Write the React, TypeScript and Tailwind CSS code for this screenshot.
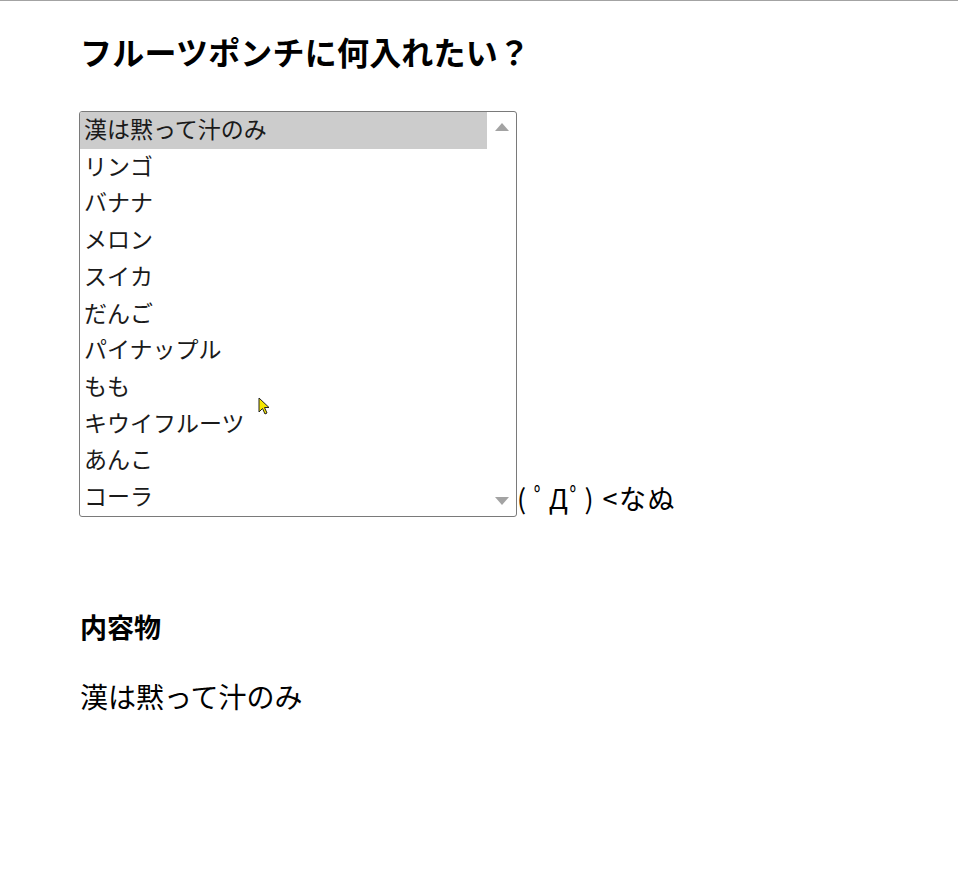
import React from 'react';

const fruits = [
  '漢は黙って汁のみ',
  'リンゴ',
  'バナナ',
  'メロン',
  'スイカ',
  'だんご',
  'パイナップル',
  'もも',
  'キウイフルーツ',
  'あんこ',
  'コーラ',
];

const font = { fontFamily: '"Noto Sans CJK JP", "Noto Sans", sans-serif' };

const Cursor: React.FC = () => (
  <svg
    className="absolute left-[258px] top-[396px]"
    width="14"
    height="20"
    viewBox="0 0 14 20"
  >
    <path
      d="M1 1 L1 15 L4.5 11.5 L7 17 L9 16 L6.5 10.5 L11 10.5 Z"
      fill="#f5e600"
      stroke="#222"
      strokeWidth="1"
      strokeLinejoin="round"
    />
  </svg>
);

const App: React.FC = () => {
  const selected = fruits[0];

  return (
    <div className="relative min-h-screen bg-white border-t border-[#a3a3a3] text-black" style={font}>
      <div className="pl-[80px] pt-[30px]">
        <h1 className="text-[32px] font-bold leading-[40px] tracking-[0.2px]">フルーツポンチに何入れたい？</h1>

        {/* Listbox */}
        <div className="flex items-end mt-[40px] -ml-px">
          <div className="flex w-[438px] h-[406px] border border-[#7a7a7a] rounded-[3px] overflow-hidden bg-white">
            <div className="flex-1 flex flex-col">
              {fruits.map((f) => (
                <div
                  key={f}
                  className={`h-[36.7px] shrink-0 pl-[4px] pb-[4px] flex items-center text-[23px] text-[#1a1a1a] ${
                    f === selected ? 'bg-[#cccccc]' : ''
                  }`}
                >
                  {f}
                </div>
              ))}
            </div>
            <div className="w-[29px] flex flex-col justify-between items-center py-[11px]">
              <div className="w-0 h-0 border-l-[7px] border-r-[7px] border-b-[8px] border-l-transparent border-r-transparent border-b-[#a3a3a3]" />
              <div className="w-0 h-0 border-l-[7px] border-r-[7px] border-t-[8px] border-l-transparent border-r-transparent border-t-[#a3a3a3]" />
            </div>
          </div>
          <span className="text-[27px] leading-[38px] tracking-[1.5px] whitespace-pre">( ﾟДﾟ) &lt;なぬ</span>
        </div>

        <h3 className="mt-[92px] text-[27px] font-bold leading-[36px]">内容物</h3>
        <p className="mt-[33px] text-[28px] leading-[36px]">{selected}</p>
      </div>
      <Cursor />
    </div>
  );
};

export default App;
